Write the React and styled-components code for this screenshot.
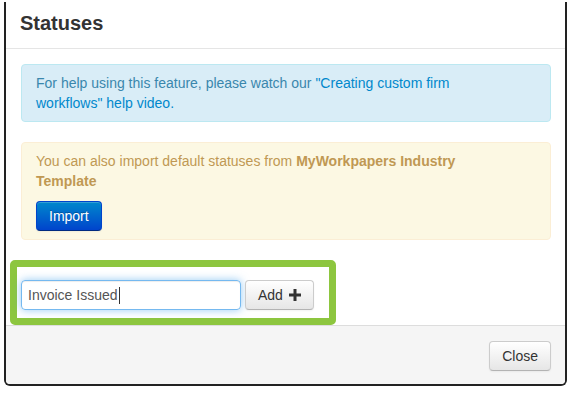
import React from "react";
import styled, { createGlobalStyle, css } from "styled-components";

const GlobalStyle = createGlobalStyle`
  html, body {
    margin: 0;
    padding: 0;
    background: #fff;
  }
  body {
    font-family: "Liberation Sans", Arial, sans-serif;
    font-size: 14px;
    line-height: 20px;
    color: #333;
  }
`;

const Modal = styled.div`
  width: 559px;
  margin: 2px 0 0 4px;
  border: 2px solid #222;
  border-top: none;
  border-radius: 0 0 6px 6px;
  background: #fff;
  overflow: hidden;
`;

const Header = styled.div`
  height: 36px;
  padding: 10px 15px 0 14px;
  border-bottom: 1px solid #e5e5e5;
`;

const Title = styled.h3`
  margin: 0;
  font-size: 20px;
  line-height: 22px;
  font-weight: bold;
  color: #333;
`;

const Body = styled.div`
  padding: 15px 14px 0 15px;
`;

const Alert = styled.div`
  padding: 8px 35px 8px 14px;
  margin-bottom: 20px;
  border: 1px solid;
  border-radius: 4px;
  ${(p) =>
    p.info
      ? css`
          background: #d9edf7;
          border-color: #bce8f1;
          color: #3a87ad;
        `
      : css`
          background: #fcf8e3;
          border-color: #fbeed5;
          color: #c09853;
        `}
`;

const Para = styled.p`
  margin: 0 0 ${(p) => (p.spaced ? "10px" : "0")};
`;

const Link = styled.a`
  color: #0088cc;
  text-decoration: none;
`;

const Button = styled.button`
  display: inline-flex;
  align-items: center;
  gap: ${(p) => (p.withIcon ? "6px" : "0")};
  height: 30px;
  padding: 4px 12px;
  font-family: inherit;
  font-size: 14px;
  line-height: 20px;
  border-radius: 4px;
  border: 1px solid #ccc;
  border-bottom-color: #b3b3b3;
  color: #333;
  background: linear-gradient(#ffffff, #e6e6e6);
  box-shadow: inset 0 1px 0 rgba(255, 255, 255, 0.2), 0 1px 2px rgba(0, 0, 0, 0.05);
  cursor: pointer;
  ${(p) =>
    p.primary &&
    css`
      color: #fff;
      border-color: #0044cc #0044cc #002a80;
      background: linear-gradient(#0088cc, #0044cc);
      text-shadow: 0 -1px 0 rgba(0, 0, 0, 0.25);
    `}
`;

const Highlight = styled.div`
  display: flex;
  align-items: center;
  gap: 4px;
  width: fit-content;
  margin: 0 0 0 -11px;
  padding: 13px 15px 8px 4px;
  border: 7px solid #8dc63f;
  border-radius: 5px;
`;

const Field = styled.div`
  box-sizing: border-box;
  display: flex;
  align-items: center;
  width: 220px;
  height: 30px;
  padding: 0 6px;
  border: 1px solid rgba(82, 168, 236, 0.8);
  border-radius: 4px;
  color: #555;
  box-shadow: inset 0 1px 1px rgba(0, 0, 0, 0.075), 0 0 8px rgba(82, 168, 236, 0.6);
`;

const Caret = styled.span`
  width: 1px;
  height: 17px;
  margin-left: 1px;
  background: #333;
`;

const Footer = styled.div`
  display: flex;
  justify-content: flex-end;
  padding: 15px 14px 13px 15px;
  background: #f5f5f5;
  border-top: 1px solid #ddd;
`;

const PlusIcon = () => (
  <svg width="12" height="12" viewBox="0 0 12 12">
    <path d="M4.5 0h3v4.5H12v3H7.5V12h-3V7.5H0v-3h4.5z" fill="#333" />
  </svg>
);

export default function App() {
  return (
    <>
      <GlobalStyle />
      <Modal>
        <Header>
          <Title>Statuses</Title>
        </Header>
        <Body>
          <Alert info>
            For help using this feature, please watch our{" "}
            <Link href="#">"Creating custom firm workflows" help video.</Link>
          </Alert>
          <Alert>
            <Para spaced>
              You can also import default statuses from{" "}
              <strong>MyWorkpapers Industry Template</strong>
            </Para>
            <Button primary>Import</Button>
          </Alert>
          <Highlight>
            <Field role="textbox">
              Invoice Issued
              <Caret />
            </Field>
            <Button withIcon>
              Add
              <PlusIcon />
            </Button>
          </Highlight>
        </Body>
        <Footer>
          <Button>Close</Button>
        </Footer>
      </Modal>
    </>
  );
}
